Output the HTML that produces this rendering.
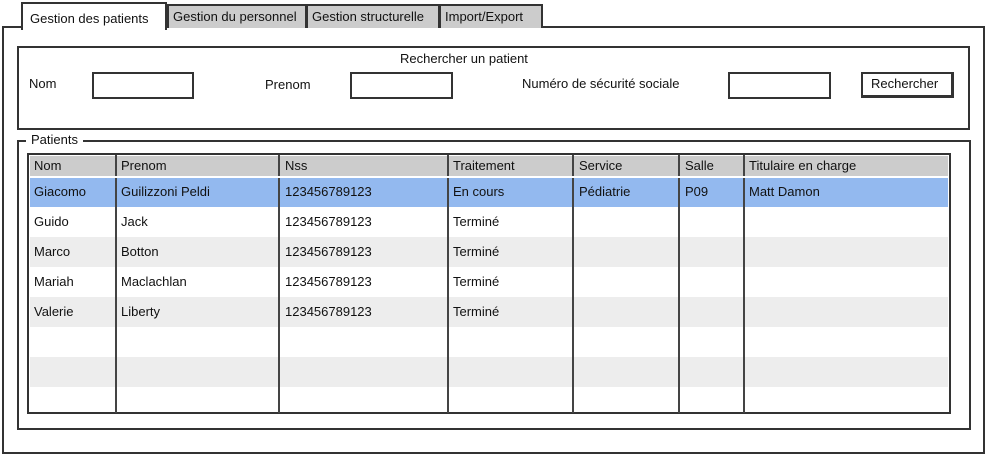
<!DOCTYPE html>
<html><head><meta charset="utf-8"><style>
*{margin:0;padding:0;box-sizing:border-box}
body{width:987px;height:457px;background:#fff;position:relative;overflow:hidden;font-family:"Liberation Sans",sans-serif;font-size:13px;color:#111}
.a{position:absolute}
.b{position:absolute;border:2px solid #333}
.tab{position:absolute;background:#ccc;border:2px solid #333;border-bottom:none;font-size:13px;padding:3px 0 0 4px;white-space:nowrap}
.t{position:absolute;white-space:nowrap}
.row{position:absolute;left:30px;width:918px;height:30px}
.vl{position:absolute;top:155px;width:2px;height:258px;background:#444}
</style></head><body>
<div class="b" style="left:2px;top:26px;width:983px;height:428px"></div>
<div class="tab" style="left:167px;top:4px;width:140px;height:24px">Gestion du personnel</div>
<div class="tab" style="left:306px;top:4px;width:134px;height:24px">Gestion structurelle</div>
<div class="tab" style="left:439px;top:4px;width:104px;height:24px">Import/Export</div>
<div class="tab" style="left:21px;top:2px;width:146px;height:28px;background:#fff;padding-top:7px;padding-left:7px">Gestion des patients</div>

<div class="b" style="left:17px;top:46px;width:953px;height:84px"></div>
<div class="t" style="left:400px;top:51px">Rechercher un patient</div>
<div class="t" style="left:29px;top:76px">Nom</div>
<div class="b" style="left:92px;top:72px;width:102px;height:27px"></div>
<div class="t" style="left:265px;top:77px">Prenom</div>
<div class="b" style="left:350px;top:72px;width:103px;height:27px"></div>
<div class="t" style="left:522px;top:76px">Numéro de sécurité sociale</div>
<div class="b" style="left:728px;top:72px;width:103px;height:27px"></div>
<div class="b" style="left:861px;top:72px;width:93px;height:26px;border-right-width:3px;border-bottom-width:3px;padding:2px 0 0 8px">Rechercher</div>

<div class="b" style="left:17px;top:140px;width:954px;height:290px"></div>
<div class="t" style="left:26px;top:132px;background:#fff;padding:0 5px">Patients</div>

<div class="a" style="left:30px;top:156px;width:918px;height:20px;background:#ccc"></div>
<div class="row" style="top:177px;background:#93b9ef"></div>
<div class="row" style="top:237px;background:#ededed"></div>
<div class="row" style="top:297px;background:#ededed"></div>
<div class="row" style="top:357px;background:#ededed"></div>
<div class="b" style="left:27px;top:153px;width:924px;height:261px"></div>
<div class="vl" style="left:115px"></div><div class="vl" style="left:278px"></div><div class="vl" style="left:447px"></div><div class="vl" style="left:572px"></div><div class="vl" style="left:678px"></div><div class="vl" style="left:743px"></div>
<div class="a" style="left:30px;top:176px;width:918px;height:2px;background:#fff"></div>

<div class="t" style="left:34px;top:158px">Nom</div><div class="t" style="left:121px;top:158px">Prenom</div><div class="t" style="left:285px;top:158px">Nss</div><div class="t" style="left:453px;top:158px">Traitement</div><div class="t" style="left:579px;top:158px">Service</div><div class="t" style="left:685px;top:158px">Salle</div><div class="t" style="left:749px;top:158px">Titulaire en charge</div>

<div class="t" style="left:34px;top:184px">Giacomo</div><div class="t" style="left:121px;top:184px">Guilizzoni Peldi</div><div class="t" style="left:285px;top:184px">123456789123</div><div class="t" style="left:453px;top:184px">En cours</div><div class="t" style="left:579px;top:184px">Pédiatrie</div><div class="t" style="left:685px;top:184px">P09</div><div class="t" style="left:749px;top:184px">Matt Damon</div>

<div class="t" style="left:34px;top:214px">Guido</div><div class="t" style="left:121px;top:214px">Jack</div><div class="t" style="left:285px;top:214px">123456789123</div><div class="t" style="left:453px;top:214px">Terminé</div>
<div class="t" style="left:34px;top:244px">Marco</div><div class="t" style="left:121px;top:244px">Botton</div><div class="t" style="left:285px;top:244px">123456789123</div><div class="t" style="left:453px;top:244px">Terminé</div>
<div class="t" style="left:34px;top:274px">Mariah</div><div class="t" style="left:121px;top:274px">Maclachlan</div><div class="t" style="left:285px;top:274px">123456789123</div><div class="t" style="left:453px;top:274px">Terminé</div>
<div class="t" style="left:34px;top:304px">Valerie</div><div class="t" style="left:121px;top:304px">Liberty</div><div class="t" style="left:285px;top:304px">123456789123</div><div class="t" style="left:453px;top:304px">Terminé</div>
</body></html>
